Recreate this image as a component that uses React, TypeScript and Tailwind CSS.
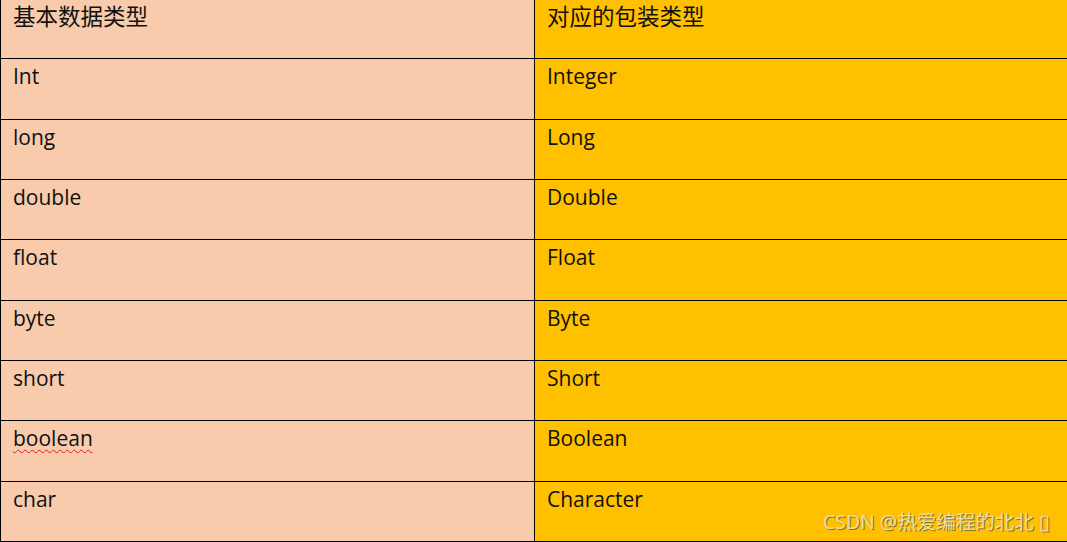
import React from "react";

const rows: { h: string; left: string; right: string; header?: boolean; wavy?: boolean }[] = [
  { h: "h-[59px]", left: "基本数据类型", right: "对应的包装类型", header: true },
  { h: "h-[61px]", left: "Int", right: "Integer" },
  { h: "h-[60px]", left: "long", right: "Long" },
  { h: "h-[60px]", left: "double", right: "Double" },
  { h: "h-[61px]", left: "float", right: "Float" },
  { h: "h-[60px]", left: "byte", right: "Byte" },
  { h: "h-[60px]", left: "short", right: "Short" },
  { h: "h-[61px]", left: "boolean", right: "Boolean", wavy: true },
  { h: "h-[60px]", left: "char", right: "Character" },
];

export default function App() {
  return (
    <div
      className="relative w-[1067px] h-[542px] overflow-hidden bg-white text-[#111]"
      style={{ fontFamily: '"Open Sans", "Noto Sans", "Noto Sans CJK SC", sans-serif' }}
    >
      <div className="flex flex-col">
        {rows.map((r, i) => (
          <div key={i} className={`flex ${r.h} border-b border-black`}>
            <div
              className={`w-[535px] shrink-0 border-l border-r border-black bg-[#F8CBAD] pl-3 ${
                r.header ? "pt-0 text-[22.5px] leading-normal" : "pt-[3px] text-[21px] leading-[28px]"
              }`}
            >
              {r.wavy ? (
                <span className="underline decoration-wavy decoration-[#e02020] decoration-1 underline-offset-[3px]">
                  {r.left}
                </span>
              ) : (
                r.left
              )}
            </div>
            <div
              className={`flex-1 bg-[#FFC000] pl-3 ${
                r.header ? "pt-0 text-[22.5px] leading-normal" : "pt-[3px] text-[21px] leading-[28px]"
              }`}
            >
              {r.right}
            </div>
          </div>
        ))}
      </div>
      <div
        className="absolute left-[823px] top-[509px] text-[19.5px] leading-[26px] text-[#ecdca4] whitespace-nowrap"
        style={{ textShadow: "1px 1px 0 #8a7433" }}
      >
        CSDN @热爱编程的北北 ▯
      </div>
    </div>
  );
}
